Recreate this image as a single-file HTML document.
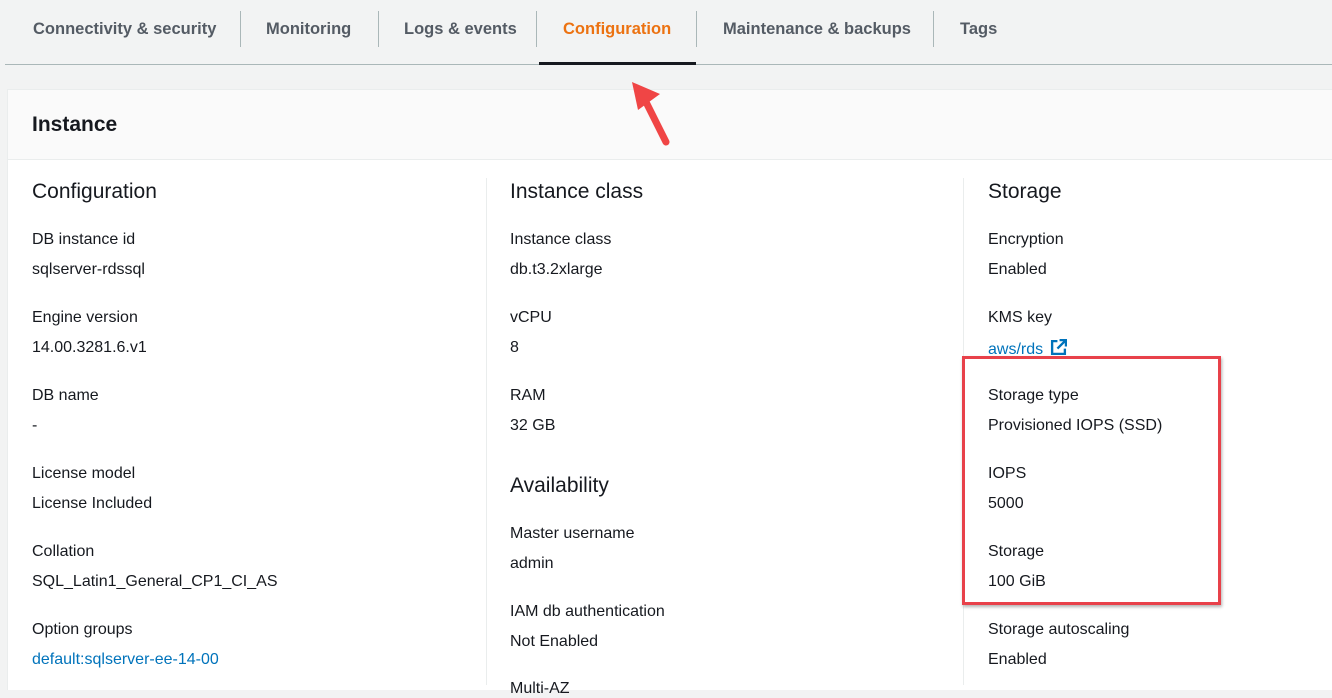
<!DOCTYPE html>
<html><head><style>
body{margin:0;width:1332px;height:685px;overflow:hidden;background:#f2f3f3;font-family:"Liberation Sans",sans-serif;position:relative;color:#16191f}
.t{position:absolute;top:20px;font-size:16.5px;font-weight:bold;color:#545b64}
.sep{position:absolute;top:11px;width:1px;height:36px;background:#aab7b8}
.a{position:absolute;white-space:nowrap}
.h{font-size:21px}
.l{font-size:16px}
.v{font-size:16px}
.lk{color:#0073bb}
</style></head><body>
<div class="t" style="left:33px">Connectivity &amp; security</div>
<div class="sep" style="left:240px"></div>
<div class="t" style="left:266px">Monitoring</div>
<div class="sep" style="left:378px"></div>
<div class="t" style="left:404px">Logs &amp; events</div>
<div class="sep" style="left:536px"></div>
<div class="t" style="left:563px;color:#ec7211">Configuration</div>
<div class="sep" style="left:696px"></div>
<div class="t" style="left:723px">Maintenance &amp; backups</div>
<div class="sep" style="left:933px"></div>
<div class="t" style="left:960px">Tags</div>
<div style="position:absolute;left:5px;top:64px;width:1327px;height:1px;background:#aab7b8"></div>
<div style="position:absolute;left:539px;top:62px;width:157px;height:3px;background:#16191f"></div>

<div style="position:absolute;left:7px;top:89px;width:1325px;height:600px;background:#fff;border-left:1px solid #eaeded;border-top:1px solid #eaeded"></div>
<div style="position:absolute;left:8px;top:90px;width:1324px;height:69px;background:#fafafa;border-bottom:1px solid #eaeded"></div>
<div class="a" style="left:32px;top:113px;font-size:21px;font-weight:bold">Instance</div>
<div style="position:absolute;left:486px;top:178px;width:1px;height:507px;background:#eaeded"></div>
<div style="position:absolute;left:963px;top:178px;width:1px;height:507px;background:#eaeded"></div>

<div class="a h" style="left:32px;top:180px">Configuration</div>
<div class="a l" style="left:32px;top:231px">DB instance id</div>
<div class="a v" style="left:32px;top:261px">sqlserver-rdssql</div>
<div class="a l" style="left:32px;top:309px">Engine version</div>
<div class="a v" style="left:32px;top:339px">14.00.3281.6.v1</div>
<div class="a l" style="left:32px;top:387px">DB name</div>
<div class="a v" style="left:32px;top:417px">-</div>
<div class="a l" style="left:32px;top:465px">License model</div>
<div class="a v" style="left:32px;top:495px">License Included</div>
<div class="a l" style="left:32px;top:543px">Collation</div>
<div class="a v" style="left:32px;top:573px">SQL_Latin1_General_CP1_CI_AS</div>
<div class="a l" style="left:32px;top:621px">Option groups</div>
<div class="a v lk" style="left:32px;top:651px">default:sqlserver-ee-14-00</div>

<div class="a h" style="left:510px;top:180px">Instance class</div>
<div class="a l" style="left:510px;top:231px">Instance class</div>
<div class="a v" style="left:510px;top:261px">db.t3.2xlarge</div>
<div class="a l" style="left:510px;top:309px">vCPU</div>
<div class="a v" style="left:510px;top:339px">8</div>
<div class="a l" style="left:510px;top:387px">RAM</div>
<div class="a v" style="left:510px;top:417px">32 GB</div>
<div class="a h" style="left:510px;top:474px">Availability</div>
<div class="a l" style="left:510px;top:525px">Master username</div>
<div class="a v" style="left:510px;top:555px">admin</div>
<div class="a l" style="left:510px;top:603px">IAM db authentication</div>
<div class="a v" style="left:510px;top:633px">Not Enabled</div>
<div class="a l" style="left:510px;top:680px">Multi-AZ</div>

<div class="a h" style="left:988px;top:180px">Storage</div>
<div class="a l" style="left:988px;top:231px">Encryption</div>
<div class="a v" style="left:988px;top:261px">Enabled</div>
<div class="a l" style="left:988px;top:309px">KMS key</div>
<div class="a v lk" style="left:988px;top:339px">aws/rds <svg width="17" height="17" viewBox="0 0 16 16" style="vertical-align:-2px;margin-left:2px"><path d="M7 2H2v12h12V9" fill="none" stroke="#0073bb" stroke-width="2.2"/><path d="M9 1h6v6M15 1L7 9" fill="none" stroke="#0073bb" stroke-width="2.2"/></svg></div>
<div class="a l" style="left:988px;top:387px">Storage type</div>
<div class="a v" style="left:988px;top:417px">Provisioned IOPS (SSD)</div>
<div class="a l" style="left:988px;top:465px">IOPS</div>
<div class="a v" style="left:988px;top:495px">5000</div>
<div class="a l" style="left:988px;top:543px">Storage</div>
<div class="a v" style="left:988px;top:573px">100 GiB</div>
<div class="a l" style="left:988px;top:621px">Storage autoscaling</div>
<div class="a v" style="left:988px;top:651px">Enabled</div>

<div style="position:absolute;left:962px;top:356px;width:253px;height:243px;border:3px solid #e8414a;box-shadow:1px 2px 3px rgba(0,0,0,.3)"></div>

<svg style="position:absolute;left:620px;top:76px" width="60" height="72" viewBox="0 0 60 72">
<path d="M46 66L26 26" stroke="#f04545" stroke-width="7" stroke-linecap="round"/>
<path d="M12 6L40 18L18 34Z" fill="#f04545"/>
</svg>
</body></html>
